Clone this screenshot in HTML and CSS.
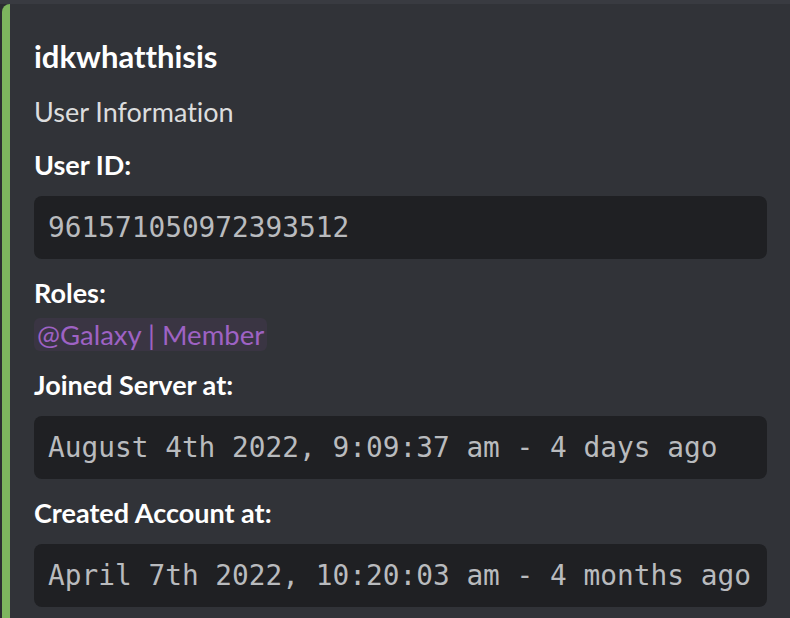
FILE: index.html
```html
<!DOCTYPE html>
<html lang="en">
<head>
<meta charset="utf-8">
<title>User Information</title>
<link rel="stylesheet" href="styles.css">
</head>
<body>
<div class="page">
  <article class="embed">
    <div class="embed-title">idkwhatthisis</div>
    <div class="embed-desc">User Information</div>
    <div class="fields">
      <div class="field">
        <div class="field-name">User ID:</div>
        <pre class="code">961571050972393512</pre>
      </div>
      <div class="field">
        <div class="field-name">Roles:</div>
        <div class="field-value"><span class="mention">@Galaxy | Member</span></div>
      </div>
      <div class="field">
        <div class="field-name">Joined Server at:</div>
        <pre class="code">August 4th 2022, 9:09:37 am - 4 days ago</pre>
      </div>
      <div class="field">
        <div class="field-name">Created Account at:</div>
        <pre class="code">April 7th 2022, 10:20:03 am - 4 months ago</pre>
      </div>
    </div>
  </article>
</div>
</body>
</html>
```
FILE: styles.css
```css
html, body {
  margin: 0;
  padding: 0;
  height: 100%;
  overflow: hidden;
  background: #2b2d31;
}

.page {
  height: 100%;
  padding-top: 4px;
  padding-left: 2px;
  box-sizing: border-box;
  background: linear-gradient(#393b41, #393b41) top / 100% 4px no-repeat, #2b2d31;
}

.embed {
  width: 733px;
  height: 100%;
  box-sizing: content-box;
  background: #313338;
  border-left: 8px solid #7db55e;
  border-radius: 8px 0 0 8px;
  padding: 30px 60px 0 24px;
  display: flex;
  flex-direction: column;
  font-family: Lato, "Noto Sans", sans-serif;
  font-variant-ligatures: none;
}

.embed-title {
  font-size: 31px;
  font-weight: 700;
  line-height: 44px;
  color: #ffffff;
  margin-bottom: 16px;
}

.embed-desc {
  font-size: 27px;
  line-height: 36px;
  color: #dcddde;
}

.fields {
  margin-top: 17px;
  display: flex;
  flex-direction: column;
  gap: 16px;
}

.field-name {
  font-size: 27px;
  font-weight: 700;
  line-height: 36px;
  color: #ffffff;
}

.field-value {
  font-size: 27.5px;
  line-height: 36px;
  color: #dcddde;
  margin-top: 4px;
  height: 36px;
}

.mention {
  display: inline-block;
  vertical-align: top;
  margin-top: 3px;
  line-height: 33px;
  padding: 0 3px;
  border-radius: 6px;
  background: #3a3543;
  color: #9e62c4;
}

.code {
  margin: 13px 0 0;
  height: 63px;
  box-sizing: border-box;
  padding: 13px 14px;
  background: #1f2023;
  border-radius: 8px;
  font-family: "DejaVu Sans Mono", "Liberation Mono", monospace;
  font-size: 27.8px;
  line-height: 37px;
  color: #b9bbbe;
  white-space: pre;
  overflow: hidden;
}
```
